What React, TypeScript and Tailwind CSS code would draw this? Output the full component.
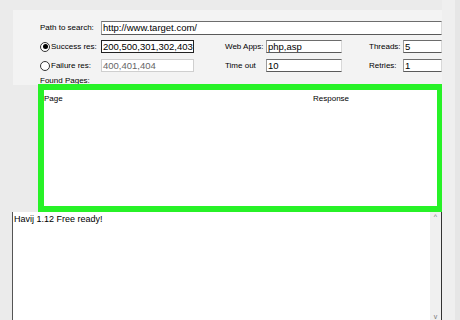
import React from "react";

const GREEN = "border-[#27f227]";

function Radio({ checked }: { checked?: boolean }) {
  return (
    <span className="w-[10px] h-[10px] rounded-full border border-[#333] bg-white flex items-center justify-center shrink-0">
      {checked && <span className="w-[5px] h-[5px] rounded-full bg-black" />}
    </span>
  );
}

function Field({ value, w, dark, disabled }: { value: string; w: string; dark?: boolean; disabled?: boolean }) {
  const border = dark
    ? "border-[#222]"
    : disabled
      ? "border-[#cfcfcf] text-[#666]"
      : "border-t-[#6d6d6d] border-l-[#9a9a9a] border-r-[#d8d8d8] border-b-[#5a5a5a]";
  return (
    <div className={`${w} h-[13px] border bg-white flex items-center pl-[1px] text-[9.5px] leading-none ${border}`}>
      {value}
    </div>
  );
}

export default function App() {
  return (
    <div
      className="w-[460px] h-[320px] overflow-hidden bg-[#ebebeb] flex text-black"
      style={{ fontFamily: '"Liberation Sans", Arial, sans-serif' }}
    >
      <div className="w-[442px] flex flex-col">
        {/* form panel */}
        <div className="ml-[13px] mt-[10px] bg-[#f3f3f3] flex flex-col">
          <div className="flex flex-col pl-[27px] pt-[11px] gap-[6px]">
            <div className="flex items-center h-[13px]">
              <span className="w-[61px] text-[8px]">Path to search:</span>
              <Field value="http://www.target.com/" w="w-[341px] h-[14px]" />
            </div>

            <div className="flex items-center h-[13px]">
              <div className="w-[61px] flex items-center gap-[1px]">
                <Radio checked />
                <span className="text-[8px]">Success res:</span>
              </div>
              <Field value="200,500,301,302,403" w="w-[93px]" dark />
              <span className="ml-[31px] w-[41px] text-[8px]">Web Apps:</span>
              <Field value="php,asp" w="w-[76px]" />
              <span className="ml-[27px] w-[34px] text-[8px]">Threads:</span>
              <Field value="5" w="w-[39px]" />
            </div>

            <div className="flex items-center h-[13px]">
              <div className="w-[61px] flex items-center gap-[1px]">
                <Radio />
                <span className="text-[8px]">Failure res:</span>
              </div>
              <Field value="400,401,404" w="w-[93px]" disabled />
              <span className="ml-[31px] w-[41px] text-[8px]">Time out</span>
              <Field value="10" w="w-[76px]" />
              <span className="ml-[27px] w-[34px] text-[8px]">Retries:</span>
              <Field value="1" w="w-[39px]" />
            </div>
          </div>
          <span className="pl-[27px] mt-[5px] text-[8px] leading-[8px]">Found Pages:</span>
        </div>

        {/* found pages list, highlighted */}
        <div className={`ml-[38px] w-[405px] h-[128px] -mt-[1px] border-[6px] ${GREEN} bg-white flex flex-col shrink-0`}>
          <div className="flex h-[14px] items-center text-[8px] mt-[2px]">
            <span className="w-[269px]">Page</span>
            <span>Response</span>
          </div>
        </div>

        {/* log */}
        <div className="ml-[12px] flex-1 flex border-l border-[#555] bg-white">
          <div className="flex-1 pl-[1px] pt-[2px] text-[9px] leading-[11px]">Havij 1.12 Free ready!</div>
          <div className="w-[12px] bg-[#f0f0f0] border-r border-[#333] flex flex-col items-center justify-between text-[7px] text-[#777] leading-none pt-[1px]">
            <span>^</span>
            <span>v</span>
          </div>
        </div>
      </div>

      <div className="flex-1 flex">
        <div className="w-[13px] bg-[#efefef]" />
        <div className="flex-1 bg-[#e6e6e6]" />
      </div>
    </div>
  );
}
